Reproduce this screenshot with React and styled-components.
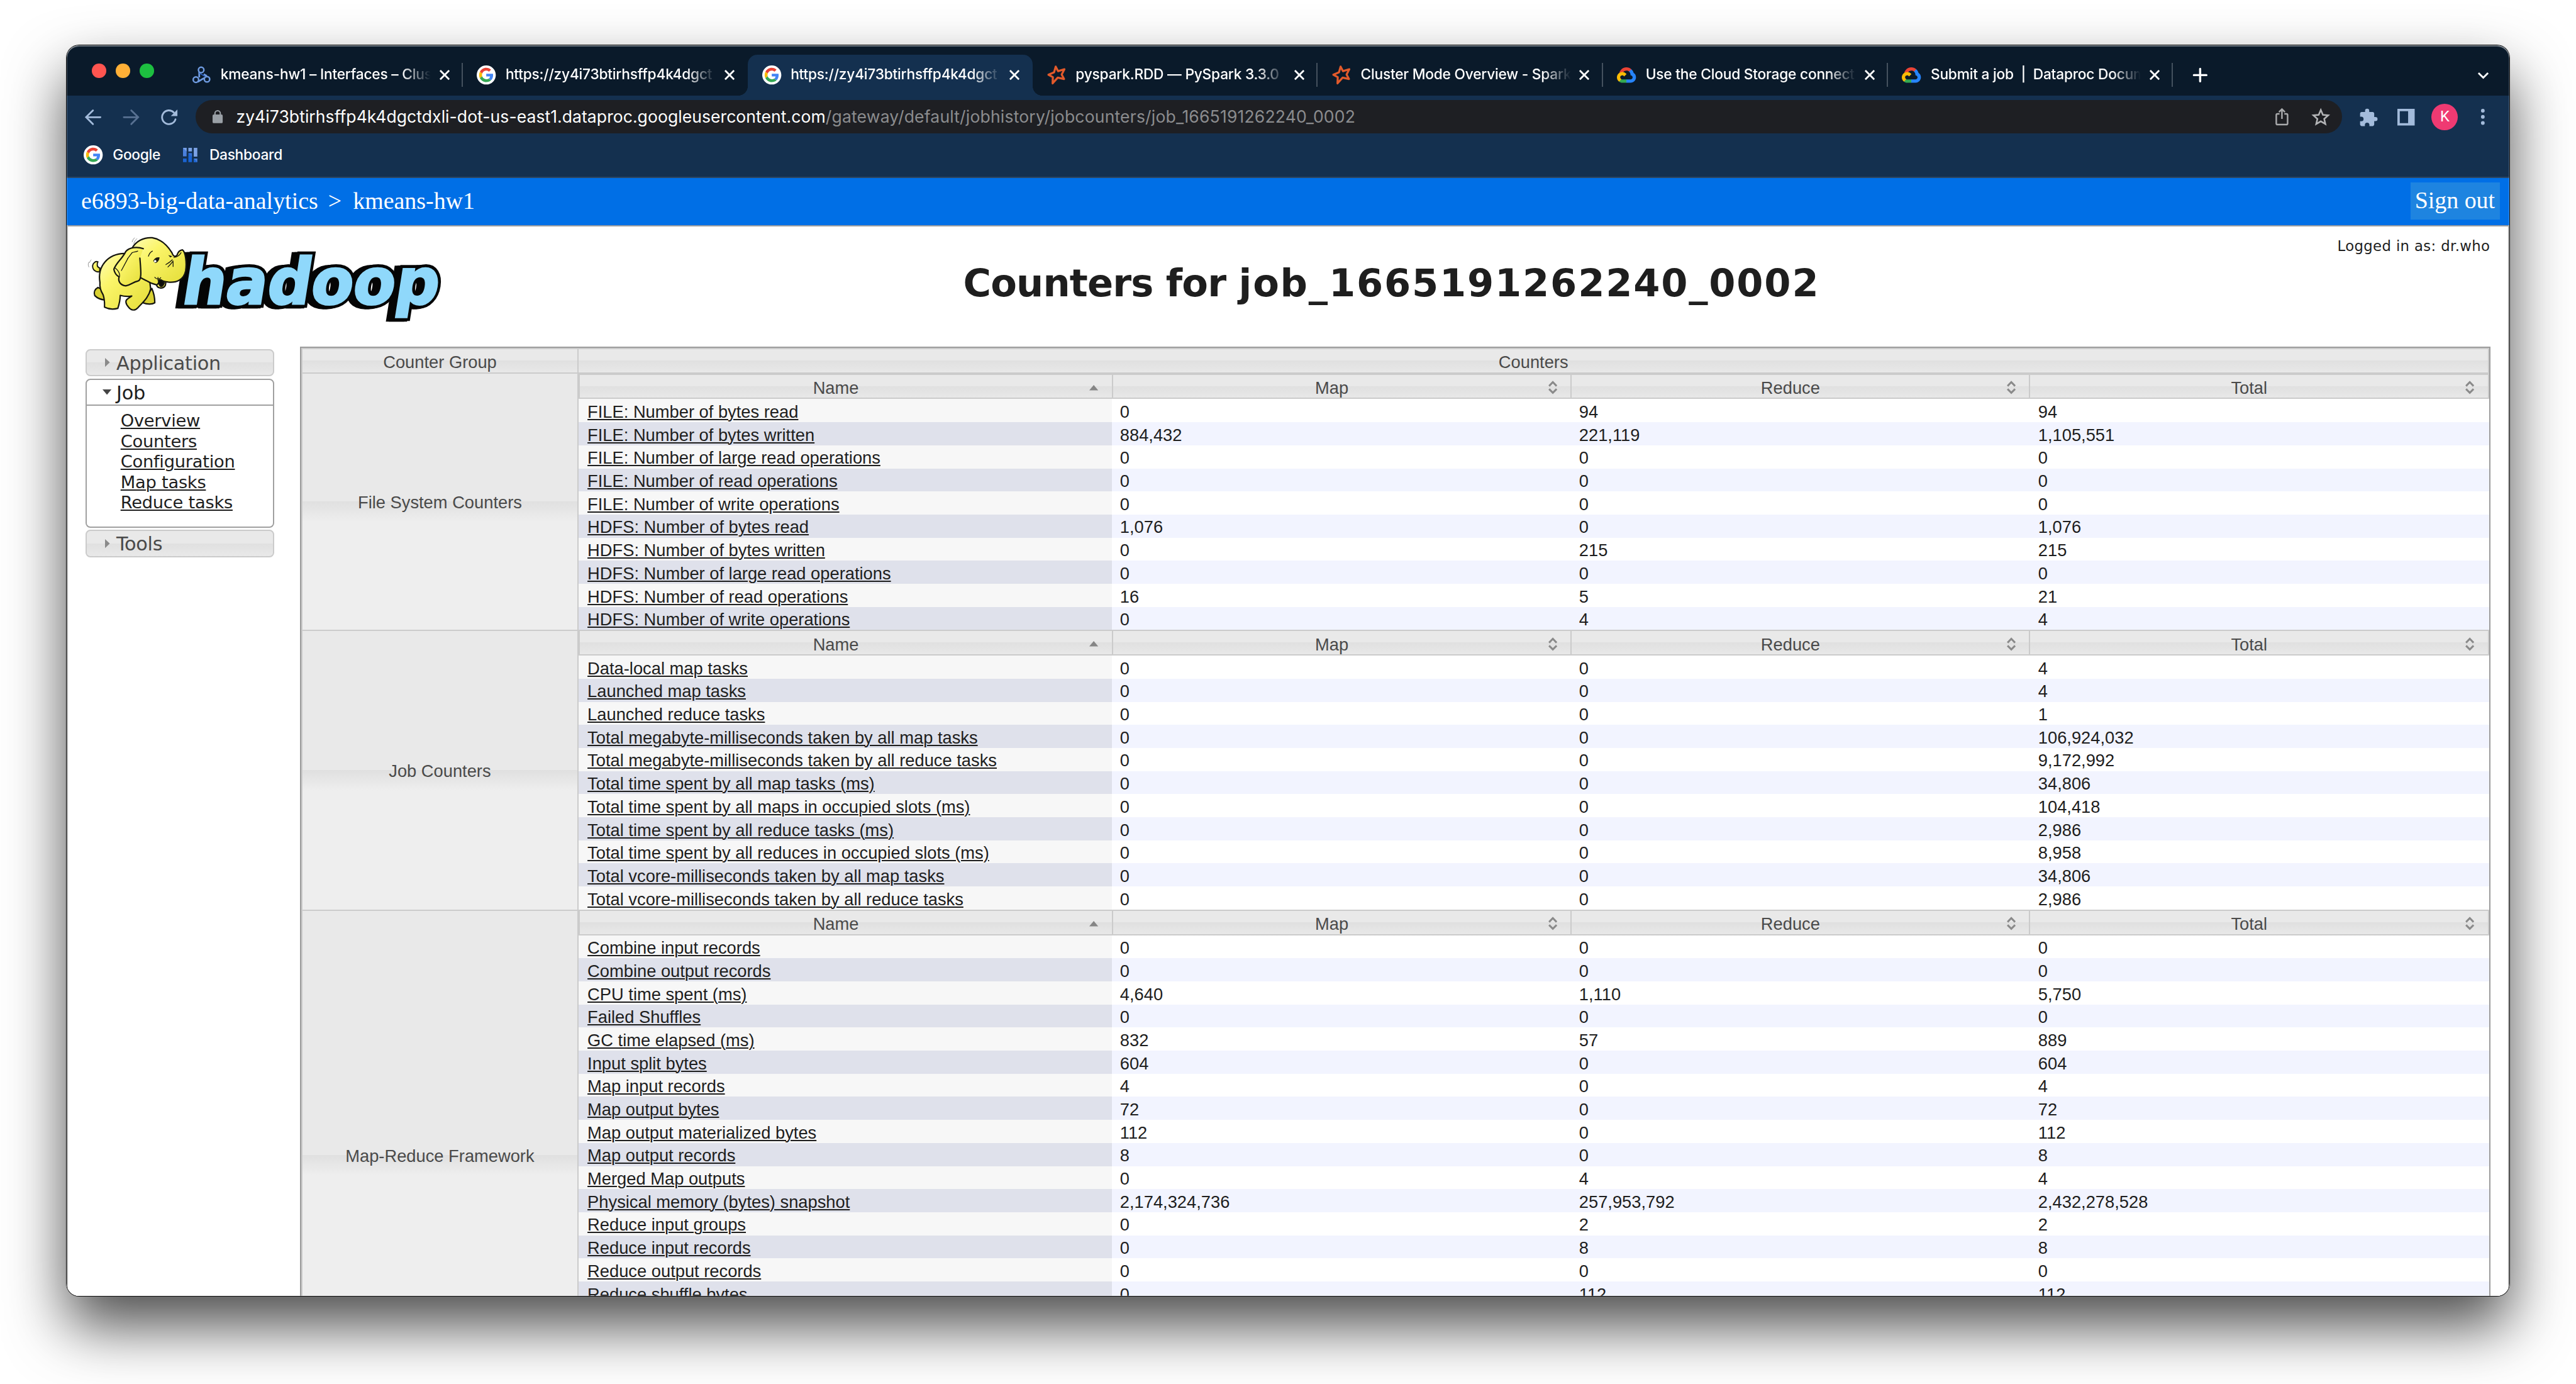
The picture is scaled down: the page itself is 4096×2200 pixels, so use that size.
import React from "react";
import styled, { createGlobalStyle, css } from "styled-components";

const SCALE = 4096 / 4320;
const u = (n) => `${(n * SCALE).toFixed(3)}px`;

const glass = css`
  background: linear-gradient(
    to bottom,
    #e9e9e9 0,
    #e9e9e9 50%,
    #e0e0e0 50%,
    #eeeeee calc(50% + ${u(34)}),
    #eeeeee 100%
  );
`;

const GlobalStyle = createGlobalStyle`
  html, body { margin: 0; padding: 0; background: #fff; overflow: hidden; }
  *, *::before, *::after { box-sizing: border-box; }
`;

const Desktop = styled.main`
  width: 4096px;
  height: 2200px;
  padding: ${u(76)} ${u(112)} ${u(148)};
  background: #fff;
  overflow: hidden;
  display: flex;
`;

const Window = styled.section`
  position: relative;
  flex: 1;
  min-width: 0;
  display: flex;
  flex-direction: column;
  overflow: hidden;
  border-radius: ${u(21)};
  background: #fff;

  &::after {
    content: "";
    position: absolute;
    inset: 0;
    border-radius: inherit;
    box-shadow: inset 0 2px 0 rgba(255, 255, 255, 0.34), inset 0 0 0 1px rgba(255, 255, 255, 0.25);
    pointer-events: none;
  }
`;

const WindowShadow = styled.div`
  flex: 1;
  min-width: 0;
  display: flex;
  border-radius: ${u(21)};
  box-shadow: 0 0 0 1px #0b0b0b, 0 ${u(50)} ${u(100)} rgba(0, 0, 0, 0.7);
`;

/* ---------- tab strip ---------- */

const TabStrip = styled.header`
  display: flex;
  align-items: flex-end;
  height: ${u(84)};
  flex: none;
  padding-left: ${u(42)};
  background: #0a1a2a;
`;

const TrafficLights = styled.div`
  display: flex;
  gap: ${u(16)};
  margin: 0 ${u(40)} ${u(29)} 0;
`;

const Light = styled.span`
  width: ${u(24)};
  height: ${u(24)};
  border-radius: 50%;
  background: ${(p) => p.$color};
`;

const TabItem = styled.div`
  position: relative;
  display: flex;
  align-items: center;
  width: ${u(478)};
  height: ${u(68)};
  padding-left: ${u(24)};
  border-radius: ${u(16)} ${u(16)} 0 0;
  background: ${(p) => (p.$active ? "#14304f" : "transparent")};

  ${(p) =>
    p.$active &&
    css`
      &::before,
      &::after {
        content: "";
        position: absolute;
        bottom: 0;
        width: ${u(16)};
        height: ${u(16)};
      }
      &::before {
        left: -${u(16)};
        background: radial-gradient(circle at 0 0, transparent ${u(15.5)}, #14304f ${u(16)});
      }
      &::after {
        right: -${u(16)};
        background: radial-gradient(circle at 100% 0, transparent ${u(15.5)}, #14304f ${u(16)});
      }
    `}
`;

const Favicon = styled.span`
  display: flex;
  align-items: center;
  justify-content: center;
  width: ${u(32)};
  height: ${u(32)};
  flex: none;
`;

const TabTitle = styled.span`
  width: ${u(352)};
  flex: none;
  margin-left: ${u(16)};
  padding-bottom: ${u(2)};
  white-space: pre;
  font: 500 ${u(24)} / ${u(34)} Inter, sans-serif;
  letter-spacing: ${u(-0.25)};
  color: #fff;
  mask-image: linear-gradient(to right, #000 ${u(304)}, transparent ${u(352)});
`;

const CloseButton = styled.span`
  display: flex;
  margin-left: ${u(15)};
`;

const TabDivider = styled.span`
  width: 2px;
  height: ${u(40)};
  margin-left: auto;
  background: #44515e;
`;

const NewTab = styled.span`
  display: flex;
  margin: 0 auto ${u(22)} ${u(34)};
`;

const TabSearch = styled.span`
  display: flex;
  margin: 0 ${u(35)} ${u(28)} 0;
`;

/* ---------- toolbar ---------- */

const Toolbar = styled.div`
  display: flex;
  align-items: center;
  height: ${u(72)};
  flex: none;
  padding-left: ${u(30)};
  background: #14304f;
`;

const NavButtons = styled.div`
  display: flex;
  gap: ${u(36)};
  width: ${u(186)};
  flex: none;
`;

const Omnibox = styled.div`
  display: flex;
  align-items: center;
  width: ${u(3600)};
  flex: none;
  height: ${u(56)};
  padding: 0 ${u(21)} 0 ${u(28)};
  border-radius: ${u(28)};
  background: #1e1f23;
  font: 400 ${u(28)} / ${u(40)} Inter, sans-serif;
`;

const UrlHost = styled.span`
  margin-left: ${u(23)};
  letter-spacing: ${u(0.06)};
  color: #fff;
`;

const UrlPath = styled.span`
  margin-right: auto;
  letter-spacing: ${u(0.19)};
  color: #8b8c8e;
`;

const OmniboxActions = styled.div`
  display: flex;
  align-items: center;
  gap: ${u(39)};
`;

const ToolbarActions = styled.div`
  display: flex;
  align-items: center;
  margin-left: ${u(29)};
  gap: ${u(34)};
`;

const Avatar = styled.span`
  display: flex;
  align-items: center;
  justify-content: center;
  width: ${u(44)};
  height: ${u(44)};
  margin: 0 ${u(5)} 0 ${u(-6)};
  border-radius: 50%;
  background: #ef3a72;
  font: 400 ${u(25)} / 1 Roboto, sans-serif;
  color: #fff;
`;

const BookmarksBar = styled.nav`
  display: flex;
  align-items: center;
  height: ${u(66)};
  flex: none;
  padding: 0 0 ${u(8)} ${u(28)};
  border-bottom: 2px solid #2c4663;
  background: #14304f;
`;

const Bookmark = styled.span`
  display: flex;
  align-items: center;
  gap: ${(p) => u(p.$gap)};
  margin-right: ${u(38)};
  font: 500 ${u(24)} / ${u(32)} Inter, sans-serif;
  letter-spacing: ${u(-0.3)};
  color: #fff;
`;

/* ---------- page ---------- */

const GatewayBar = styled.div`
  display: flex;
  align-items: center;
  justify-content: space-between;
  height: ${u(80)};
  flex: none;
  padding: 0 ${u(16)} 0 ${u(24)};
  background: #006fe6;
  font: 400 ${u(40)} / ${u(62)} "Liberation Serif", serif;
  color: #fff;
`;

const Breadcrumb = styled.span`
  padding-bottom: ${u(3)};
  white-space: pre;
`;

const Separator = styled.span`
  margin: 0 ${u(19)} 0 ${u(17)};
`;

const SignOut = styled.span`
  height: ${u(62)};
  margin-bottom: ${u(2)};
  padding: 0 ${u(8)} 0 ${u(7.5)};
  background: #1e84e0;
  line-height: ${u(60)};
`;

const Page = styled.div`
  flex: 1;
  min-height: 0;
  display: flex;
  flex-direction: column;
  border: 2px solid #a0a0a0;
  border-bottom: 0;
  background: #fff;
  color: #1e1e1e;
  font-family: "DejaVu Sans", sans-serif;
  overflow: hidden;
`;

const Banner = styled.div`
  display: grid;
  grid-template-columns: ${u(389)} 1fr ${u(300)};
  height: ${u(201)};
  flex: none;
`;

const LogoSlot = styled.div`
  padding: ${u(10)} 0 0 ${u(26)};
  overflow: visible;
  display: flex;
  align-items: flex-start;
`;

const Title = styled.h1`
  margin: 0;
  padding: ${u(55)} 0 0 ${u(258)};
  text-align: center;
  white-space: nowrap;
  font: 700 ${u(64)} / ${u(80)} "DejaVu Sans", sans-serif;
  letter-spacing: ${u(-0.9)};
`;

const JobId = styled.span`
  letter-spacing: ${u(1.9)};
`;

const UserInfo = styled.div`
  padding: ${u(17)} ${u(30)} 0 0;
  text-align: right;
  white-space: nowrap;
  font-size: ${u(24)};
  line-height: ${u(32)};
  letter-spacing: ${u(0.4)};
`;

const Columns = styled.div`
  display: flex;
  align-items: flex-start;
  padding-left: ${u(29)};
`;

const Sidebar = styled.aside`
  width: ${u(317)};
  flex: none;
  margin: ${u(4)} ${u(43)} 0 0;
`;

const SectionHead = styled.div`
  display: flex;
  align-items: center;
  height: ${u(46)};
  padding-left: ${u(27)};
  font-size: ${u(32)};
  line-height: ${u(40)};
  letter-spacing: ${u(-0.35)};
  border: 2px solid ${(p) => (p.$open ? "#a0a0a0" : "#cbcbcb")};
  border-radius: ${(p) => (p.$open ? `${u(8)} ${u(8)} 0 0` : u(8))};
  color: ${(p) => (p.$open ? "#1e1e1e" : "#4a4a4a")};
  margin-bottom: ${(p) => (p.$open ? 0 : u(3.5))};
  ${(p) => (p.$open ? "background: #fff;" : glass)}
`;

const SectionLabel = styled.span`
  padding-top: ${u(3)};
`;

const ArrowSlot = styled.span`
  display: flex;
  justify-content: center;
  width: ${u(15)};
  margin-right: ${u(8)};
`;

const LinkPanel = styled.div`
  display: flex;
  flex-direction: column;
  align-items: flex-start;
  height: ${u(204)};
  margin-bottom: ${u(3.5)};
  padding: ${u(8.5)} 0 0 ${u(57)};
  border: 2px solid #a0a0a0;
  border-top: 0;
  border-radius: 0 0 ${u(8)} ${u(8)};
  font-size: ${u(28.8)};
  line-height: ${u(34.3)};
  letter-spacing: ${u(-0.27)};
`;

const SideLink = styled.a`
  text-decoration: underline;
  text-decoration-thickness: 2px;
  text-underline-offset: ${u(2.5)};
`;

const CounterTable = styled.div`
  width: ${u(3674)};
  flex: none;
  border: 2px solid #9c9c9c;
  border-bottom: 0;
  font: 400 ${u(28.8)} / ${u(33)} "Liberation Sans", sans-serif;
`;

const HeaderRow = styled.div`
  display: flex;
  height: ${u(43)};
  border: solid #cbcbcb;
  border-width: 2px;
`;

const HeaderCell = styled.div`
  ${glass}
  display: flex;
  align-items: center;
  justify-content: center;
  padding-top: ${u(5)};
  color: #4a4a4a;
  ${(p) => (p.$first ? `width: ${u(463)}; flex: none; border-right: 2px solid #cbcbcb;` : "flex: 1;")}
`;

const Group = styled.div`
  display: flex;
  height: ${(p) => u(p.$height)};
`;

const GroupName = styled.div`
  ${glass}
  display: flex;
  align-items: center;
  justify-content: center;
  width: ${u(465)};
  flex: none;
  padding-top: ${u(3)};
  border: solid #cbcbcb;
  border-width: ${(p) => (p.$first ? "0" : "2px")} 2px 0 2px;
  color: #4a4a4a;
`;

const GroupBody = styled.div`
  flex: 1;
  padding-right: ${u(1)};
`;

const gridColumns = css`
  display: grid;
  grid-template-columns: ${u(894)} 1fr 1fr 1fr;
`;

const SubHeader = styled.div`
  ${gridColumns}
  height: ${u(43)};
  border: solid #cbcbcb;
  border-width: 2px 2px 2px 0;
`;

const SubHeaderCell = styled.div`
  ${glass}
  display: flex;
  align-items: center;
  padding: 0 ${u(22)} 0 ${u(4)};
  border-left: 2px solid #cbcbcb;
  color: #4a4a4a;
`;

const SubHeaderLabel = styled.span`
  flex: 1;
  padding-top: ${u(5)};
  text-align: center;
`;

const SortSlot = styled.span`
  display: flex;
  padding-top: ${u(4)};
`;

const Row = styled.div`
  ${gridColumns}
  height: ${u(38.71)};
  background: ${(p) => (p.$even ? "#f2f4ff" : "#ffffff")};
  line-height: ${u(38.71)};
`;

const NameCell = styled.div`
  padding: ${u(2.7)} 0 0 ${u(15)};
  background: ${(p) => (p.$even ? "#dfe1eb" : "#f7f7f7")};
`;

const ValueCell = styled.div`
  padding: ${u(2.7)} 0 0 ${u(14)};
`;

const CounterLink = styled.a`
  text-decoration: underline;
  text-decoration-thickness: 2px;
  text-underline-offset: ${u(2.5)};
`;

/* ---------- drawings ---------- */

const Svg = styled.svg`
  display: block;
  flex: none;
  width: ${(p) => u(p.$w)};
  height: ${(p) => u(p.$h)};
  overflow: visible;
`;

const GoogleIcon = () => (
  <Svg $w={32} $h={32} viewBox="0 0 32 32">
    <circle cx="16" cy="16" r="16" fill="#fff" />
    <g transform="translate(4 4)">
      <path fill="#ea4335" d="M12 4.75c1.77 0 3.35.61 4.6 1.8l3.43-3.43C17.95 1.19 15.24 0 12 0 7.31 0 3.26 2.69 1.28 6.61l3.99 3.1C6.22 6.86 8.87 4.75 12 4.75z" />
      <path fill="#4285f4" d="M23.49 12.27c0-.79-.07-1.54-.19-2.27H12v4.51h6.47c-.29 1.48-1.14 2.73-2.4 3.58l3.86 3c2.26-2.09 3.56-5.17 3.56-8.82z" />
      <path fill="#fbbc05" d="M5.26 14.29c-.25-.72-.38-1.49-.38-2.29s.14-1.57.38-2.29l-3.98-3.1C.46 8.23 0 10.06 0 12s.46 3.77 1.28 5.39z" />
      <path fill="#34a853" d="M12 24c3.24 0 5.95-1.06 7.93-2.91l-3.86-3c-1.08.72-2.45 1.16-4.07 1.16-3.13 0-5.78-2.11-6.73-4.96l-3.99 3.1C3.26 21.31 7.31 24 12 24z" />
    </g>
  </Svg>
);

const ClusterIcon = () => (
  <Svg $w={32} $h={30} viewBox="574 46 96 92" fill="none" stroke="#6f9be0" strokeWidth="8">
    <path d="M611 75V104M634 88L650 97M604 127L636 108" strokeWidth="9" />
    <path d="M612 82L640 99" stroke="#2a62c8" strokeWidth="5" />
    <circle cx="621" cy="66" r="14" />
    <circle cx="594" cy="116" r="14" />
    <circle cx="651" cy="114" r="14" />
  </Svg>
);

const SparkIcon = () => (
  <Svg $w={32} $h={32} viewBox="0 0 32 32" fill="none" stroke="#e25a2b" strokeWidth="3.4" strokeLinejoin="round">
    <path d="M14.4 2L18.3 9.6L29 6.4L24.4 15.4L28.4 22.8L17.8 20.4L9.2 30L9.6 19.6L2.2 15.6L11.6 11.6Z" />
  </Svg>
);

const CloudIcon = () => (
  <Svg $w={32} $h={26} viewBox="0 0 256 206">
    <path fill="#ea4335" d="M170.252 56.819l22.253-22.253 1.483-9.37C153.437-11.677 88.976-7.496 52.42 33.92 42.267 45.423 34.734 59.764 30.717 74.573l7.97-1.123 44.505-7.34 3.436-3.513c19.797-21.742 53.27-24.667 76.128-6.168z" />
    <path fill="#2684fc" d="M224.205 73.918a100.249 100.249 0 0 0-30.217-48.722l-31.232 31.232a55.515 55.515 0 0 1 20.379 44.037v5.544c15.35 0 27.797 12.445 27.797 27.796 0 15.352-12.446 27.485-27.797 27.485h-55.671l-5.466 5.934v33.34l5.466 5.231h55.67c39.93.311 72.553-31.494 72.864-71.424a72.303 72.303 0 0 0-31.793-60.453" />
    <path fill="#34a853" d="M71.87 205.796h55.593V161.29H71.87a27.275 27.275 0 0 1-11.4-2.498l-7.887 2.42-22.409 22.253-1.952 7.574c12.567 9.489 27.9 14.825 43.647 14.757" />
    <path fill="#fbbc05" d="M71.87 61.425C31.94 61.664-.237 94.228.001 134.158a72.301 72.301 0 0 0 28.222 56.88l32.248-32.246c-13.99-6.322-20.208-22.786-13.887-36.776 6.32-13.99 22.786-20.208 36.775-13.888a27.796 27.796 0 0 1 13.887 13.888l32.248-32.248A72.224 72.224 0 0 0 71.87 61.425" />
  </Svg>
);

const DashboardIcon = () => (
  <Svg $w={24} $h={24} viewBox="528 459 72 72">
    <path fill="#4a80dc" d="M528 459h18v43h-18zM582 513h18v18h-18z" />
    <path fill="#7ba2e6" d="M555 459h18v18h-18zM582 459h18v44h-18zM528 459h18v18z" />
    <path fill="#1a63d2" d="M555 486h18v45h-18zM528 513h18v18h-18zM582 513v18h18z" />
    <path fill="#3571d8" d="M555 486h18v18z" />
  </Svg>
);

const CloseIcon = () => (
  <Svg $w={17} $h={17} viewBox="0 0 17 17" stroke="#fff" strokeWidth="3">
    <path d="M1 1L16 16M16 1L1 16" />
  </Svg>
);

const PlusIcon = () => (
  <Svg $w={24} $h={24} viewBox="0 0 24 24" stroke="#fff" strokeWidth="3.6" strokeLinecap="round">
    <path d="M12 1.5V22.5M1.5 12H22.5" />
  </Svg>
);

const ChevronDownIcon = () => (
  <Svg $w={18} $h={11} viewBox="0 0 18 11" fill="none" stroke="#fff" strokeWidth="3">
    <path d="M1 1L9 9L17 1" />
  </Svg>
);

const BackIcon = () => (
  <Svg $w={28} $h={26} viewBox="0 0 28 26" fill="none" stroke="#a3bbdb" strokeWidth="3" strokeLinecap="round">
    <path d="M13.5 1.5L2 13L13.5 24.5M2.5 13H26" />
  </Svg>
);

const ForwardIcon = () => (
  <Svg $w={28} $h={26} viewBox="0 0 28 26" fill="none" stroke="#587192" strokeWidth="3" strokeLinecap="round">
    <path d="M14.5 1.5L26 13L14.5 24.5M25.5 13H2" />
  </Svg>
);

const ReloadIcon = () => (
  <Svg $w={28} $h={26} viewBox="0 0 28 26" fill="none" stroke="#a3bbdb" strokeWidth="3">
    <path d="M24.3 16.5A11.5 11.5 0 1 1 21.4 4.9" strokeLinecap="round" />
    <path d="M27.5 0V11H16.5Z" fill="#a3bbdb" stroke="none" />
  </Svg>
);

const LockIcon = () => (
  <Svg $w={17} $h={22} viewBox="0 0 17 22">
    <rect x="0" y="7.5" width="17" height="14.5" rx="2" fill="#9aa0a6" />
    <path d="M4 9V5.5a4.5 4.5 0 0 1 9 0V9" fill="none" stroke="#9aa0a6" strokeWidth="2.2" />
  </Svg>
);

const ShareIcon = () => (
  <Svg $w={22} $h={29} viewBox="0 0 22 29" fill="none" stroke="#a9aaac" strokeWidth="2.6">
    <path d="M7 9.5H3.5a2 2 0 0 0-2 2V25.500a2 2 0 0 0 2 2h15a2 2 0 0 0 2-2V11.500a2 2 0 0 0-2-2H15M11 18V2M6 6.500L11 1.600L16 6.500" />
  </Svg>
);

const StarIcon = () => (
  <Svg $w={30} $h={29} viewBox="0 0 30 29" fill="none" stroke="#b3b4b6" strokeWidth="2.7">
    <path d="M15 3L18.5 11.2L27.400 12L20.700 17.900L22.700 26.600L15 22L7.300 26.600L9.300 17.900L2.600 12L11.500 11.200Z" />
  </Svg>
);

const PuzzleIcon = () => (
  <Svg $w={30} $h={30} viewBox="1.500 0.500 21.500 21.500" fill="#a3bbdb">
    <path d="M20.500 11H19V7c0-1.100-.9-2-2-2h-4V3.500a2.500 2.500 0 0 0-5 0V5H4c-1.100 0-1.990.9-1.990 2v3.800H3.500a2.700 2.700 0 0 1 0 5.400H2V20c0 1.100.9 2 2 2h3.800v-1.500a2.700 2.700 0 0 1 5.400 0V22H17c1.100 0 2-.9 2-2v-4h1.500a2.500 2.500 0 0 0 0-5z" />
  </Svg>
);

const SidePanelIcon = () => (
  <Svg $w={29} $h={28} viewBox="0 0 29 28">
    <path fill="#a3bbdb" fillRule="evenodd" d="M0 0H29V28H0ZM4 4V24H18V4Z" />
  </Svg>
);

const MenuIcon = () => (
  <Svg $w={6} $h={27} viewBox="0 0 6 27" fill="#a3bbdb">
    <circle cx="3" cy="3.200" r="3.100" />
    <circle cx="3" cy="13.500" r="3.100" />
    <circle cx="3" cy="23.800" r="3.100" />
  </Svg>
);

const SortAscIcon = () => (
  <Svg $w={15} $h={9} viewBox="0 0 15 9">
    <path d="M7.500 0L15 9H0Z" fill="#858585" />
  </Svg>
);

const SortIcon = () => (
  <Svg $w={15} $h={21} viewBox="0 0 15 21" fill="none" stroke="#8a8a8a" strokeWidth="3.200">
    <path d="M1.200 8L7.500 1.600L13.800 8M1.200 13L7.500 19.400L13.800 13" />
  </Svg>
);

const ArrowRight = () => (
  <Svg $w={8} $h={15} viewBox="0 0 8 15">
    <path d="M0 0L8 7.500L0 15Z" fill="#8a8a8a" />
  </Svg>
);

const ArrowDown = () => (
  <Svg $w={15} $h={9} viewBox="0 0 15 9">
    <path d="M0 0H15L7.500 9Z" fill="#454545" />
  </Svg>
);

const wordmark = {
  x: 0,
  y: 0,
  fontFamily: '"DejaVu Sans", sans-serif',
  fontWeight: 700,
  fontSize: 320,
  textLength: 1290,
  lengthAdjust: "spacingAndGlyphs",
};

const HadoopLogo = () => (
  <Svg $w={610} $h={150} viewBox="0 0 1830 450">
    <defs>
      <linearGradient id="skin" x1="0" y1="0" x2="1" y2="1">
        <stop offset="0" stopColor="#fdfbb8" />
        <stop offset="0.35" stopColor="#fbf56a" />
        <stop offset="1" stopColor="#e3dc36" />
      </linearGradient>
      <g id="letters">
        <text {...wordmark}>hadoop</text>
      </g>
    </defs>
    <g transform="translate(486 358) skewX(-9)" strokeLinejoin="miter" strokeMiterlimit="3">
      <g aria-hidden="true" fill="#050505" stroke="#050505" strokeWidth="40">
        <use href="#letters" x="-28" y="4" />
        <use href="#letters" x="-14" y="2" />
        <use href="#letters" />
      </g>
      <g aria-hidden="true" fill="#8fd8fb" stroke="#8fd8fb" strokeWidth="10">
        <use href="#letters" />
      </g>
    </g>
    <g stroke="#15150f" strokeWidth="7" strokeLinejoin="round" strokeLinecap="round" fill="url(#skin)">
      <path d="M80 196C60 200 45 186 45 166C48 150 60 142 72 146C64 160 68 174 82 178Z" strokeWidth="6" />
      <path d="M72 275C55 284 50 300 56 316C70 330 86 336 106 338L100 288Z" fill="#d9d133" />
      <path d="M298 352C320 361 345 361 358 352C358 325 352 300 343 280Z" fill="#d9d133" />
      <path d="M82 250C68 170 120 106 206 104L330 220L337 282C328 325 300 348 272 378C258 393 240 392 226 374C210 356 208 340 222 332L242 318C222 322 202 320 184 315C184 340 178 362 172 380C150 386 125 384 105 374C106 350 106 335 98 312C84 290 80 270 82 250Z" />
      <path d="M366 258C368 278 392 284 406 272C416 262 414 250 410 238Z" />
      <path d="M242 80C262 42 302 22 345 25C390 32 424 68 444 100C452 122 462 122 470 112C474 98 484 88 497 86C512 96 520 150 513 192C504 236 468 252 426 248C410 246 398 244 388 238C380 246 376 256 368 262C348 258 330 250 316 241L236 200Z" />
      <path d="M378 240C388 232 400 242 405 252C402 262 396 270 388 270C380 262 376 250 378 240Z" fill="#0c0c08" />
      <path d="M300 80C268 68 230 74 212 94C196 130 164 148 152 184C156 206 168 216 178 222C172 246 186 264 212 267C238 262 248 248 272 243C294 240 288 190 283 128" />
    </g>
    <g fill="none" stroke="#15150f" strokeWidth="4" strokeLinecap="round">
      <path d="M220 132L244 100C254 96 264 96 272 92M190 190L222 130M160 178C176 192 184 206 180 222M326 118C330 104 338 96 346 92M414 160C428 152 440 142 446 136M424 172C434 162 444 152 450 142M450 146V170M454 124C470 122 484 112 490 100M358 224C366 234 380 236 388 226M374 224V240" />
      <path d="M26 148C22 156 22 164 26 172M38 136C34 140 32 144 30 150M244 46C246 38 250 30 256 26M252 54C256 42 262 36 268 30" strokeWidth="2.500" stroke="#777" />
    </g>
    <path d="M350 142C356 128 366 122 382 124C380 140 372 150 360 152Z" fill="#1a1a12" />
    <circle cx="360" cy="143" r="6" fill="#fff" />
    <path d="M426 112L446 118L436 124Z" fill="#1a1a12" />
  </Svg>
);

/* ---------- data ---------- */

const TABS = [
  { title: "kmeans-hw1 – Interfaces – Clus", Icon: ClusterIcon, divider: true },
  { title: "https://zy4i73btirhsffp4k4dgct", Icon: GoogleIcon },
  { title: "https://zy4i73btirhsffp4k4dgct", Icon: GoogleIcon, active: true },
  { title: "pyspark.RDD — PySpark 3.3.0", Icon: SparkIcon, divider: true },
  { title: "Cluster Mode Overview - Spark", Icon: SparkIcon, divider: true },
  { title: "Use the Cloud Storage connect", Icon: CloudIcon, divider: true },
  { title: "Submit a job  |  Dataproc Docum", Icon: CloudIcon, divider: true },
];

const GROUPS = [
  {
    name: "File System Counters",
    height: 430,
    rows: [
      ["FILE: Number of bytes read", "0", "94", "94"],
      ["FILE: Number of bytes written", "884,432", "221,119", "1,105,551"],
      ["FILE: Number of large read operations", "0", "0", "0"],
      ["FILE: Number of read operations", "0", "0", "0"],
      ["FILE: Number of write operations", "0", "0", "0"],
      ["HDFS: Number of bytes read", "1,076", "0", "1,076"],
      ["HDFS: Number of bytes written", "0", "215", "215"],
      ["HDFS: Number of large read operations", "0", "0", "0"],
      ["HDFS: Number of read operations", "16", "5", "21"],
      ["HDFS: Number of write operations", "0", "4", "4"],
    ],
  },
  {
    name: "Job Counters",
    height: 468.8,
    rows: [
      ["Data-local map tasks", "0", "0", "4"],
      ["Launched map tasks", "0", "0", "4"],
      ["Launched reduce tasks", "0", "0", "1"],
      ["Total megabyte-milliseconds taken by all map tasks", "0", "0", "106,924,032"],
      ["Total megabyte-milliseconds taken by all reduce tasks", "0", "0", "9,172,992"],
      ["Total time spent by all map tasks (ms)", "0", "0", "34,806"],
      ["Total time spent by all maps in occupied slots (ms)", "0", "0", "104,418"],
      ["Total time spent by all reduce tasks (ms)", "0", "0", "2,986"],
      ["Total time spent by all reduces in occupied slots (ms)", "0", "0", "8,958"],
      ["Total vcore-milliseconds taken by all map tasks", "0", "0", "34,806"],
      ["Total vcore-milliseconds taken by all reduce tasks", "0", "0", "2,986"],
    ],
  },
  {
    name: "Map-Reduce Framework",
    height: 821,
    rows: [
      ["Combine input records", "0", "0", "0"],
      ["Combine output records", "0", "0", "0"],
      ["CPU time spent (ms)", "4,640", "1,110", "5,750"],
      ["Failed Shuffles", "0", "0", "0"],
      ["GC time elapsed (ms)", "832", "57", "889"],
      ["Input split bytes", "604", "0", "604"],
      ["Map input records", "4", "0", "4"],
      ["Map output bytes", "72", "0", "72"],
      ["Map output materialized bytes", "112", "0", "112"],
      ["Map output records", "8", "0", "8"],
      ["Merged Map outputs", "0", "4", "4"],
      ["Physical memory (bytes) snapshot", "2,174,324,736", "257,953,792", "2,432,278,528"],
      ["Reduce input groups", "0", "2", "2"],
      ["Reduce input records", "0", "8", "8"],
      ["Reduce output records", "0", "0", "0"],
      ["Reduce shuffle bytes", "0", "112", "112"],
    ],
  },
];

const JOB_LINKS = ["Overview", "Counters", "Configuration", "Map tasks", "Reduce tasks"];
const COLUMNS = ["Name", "Map", "Reduce", "Total"];

/* ---------- composition ---------- */

const Tab = ({ title, Icon, active, divider }) => (
  <TabItem $active={active}>
    <Favicon>
      <Icon />
    </Favicon>
    <TabTitle>{title}</TabTitle>
    <CloseButton>
      <CloseIcon />
    </CloseButton>
    {divider && <TabDivider />}
  </TabItem>
);

const CounterGroup = ({ name, height, rows, first }) => (
  <Group $height={height}>
    <GroupName $first={first}>{name}</GroupName>
    <GroupBody>
      <SubHeader>
        {COLUMNS.map((c, i) => (
          <SubHeaderCell key={c}>
            <SubHeaderLabel>{c}</SubHeaderLabel>
            <SortSlot>{i === 0 ? <SortAscIcon /> : <SortIcon />}</SortSlot>
          </SubHeaderCell>
        ))}
      </SubHeader>
      {rows.map(([label, ...values], i) => (
        <Row key={label} $even={i % 2 === 1}>
          <NameCell $even={i % 2 === 1}>
            <CounterLink>{label}</CounterLink>
          </NameCell>
          {values.map((v, j) => (
            <ValueCell key={j}>{v}</ValueCell>
          ))}
        </Row>
      ))}
    </GroupBody>
  </Group>
);

export default function App() {
  return (
    <>
      <GlobalStyle />
      <Desktop>
        <WindowShadow>
          <Window>
            <TabStrip>
              <TrafficLights>
                <Light $color="#ff5550" />
                <Light $color="#ffb037" />
                <Light $color="#1dbf40" />
              </TrafficLights>
              {TABS.map((t, i) => (
                <Tab key={i} {...t} />
              ))}
              <NewTab>
                <PlusIcon />
              </NewTab>
              <TabSearch>
                <ChevronDownIcon />
              </TabSearch>
            </TabStrip>
            <Toolbar>
              <NavButtons>
                <BackIcon />
                <ForwardIcon />
                <ReloadIcon />
              </NavButtons>
              <Omnibox>
                <LockIcon />
                <UrlHost>zy4i73btirhsffp4k4dgctdxli-dot-us-east1.dataproc.googleusercontent.com</UrlHost>
                <UrlPath>/gateway/default/jobhistory/jobcounters/job_1665191262240_0002</UrlPath>
                <OmniboxActions>
                  <ShareIcon />
                  <StarIcon />
                </OmniboxActions>
              </Omnibox>
              <ToolbarActions>
                <PuzzleIcon />
                <SidePanelIcon />
                <Avatar>K</Avatar>
                <MenuIcon />
              </ToolbarActions>
            </Toolbar>
            <BookmarksBar>
              <Bookmark $gap={17}>
                <GoogleIcon />
                Google
              </Bookmark>
              <Bookmark $gap={20}>
                <DashboardIcon />
                Dashboard
              </Bookmark>
            </BookmarksBar>
            <GatewayBar>
              <Breadcrumb>
                e6893-big-data-analytics
                <Separator>&gt;</Separator>
                kmeans-hw1
              </Breadcrumb>
              <SignOut>Sign out</SignOut>
            </GatewayBar>
            <Page>
              <Banner>
                <LogoSlot>
                  <HadoopLogo />
                </LogoSlot>
                <Title>
                  Counters for <JobId>job_1665191262240_0002</JobId>
                </Title>
                <UserInfo>Logged in as: dr.who</UserInfo>
              </Banner>
              <Columns>
                <Sidebar>
                  <SectionHead>
                    <ArrowSlot>
                      <ArrowRight />
                    </ArrowSlot>
                    <SectionLabel>Application</SectionLabel>
                  </SectionHead>
                  <SectionHead $open>
                    <ArrowSlot>
                      <ArrowDown />
                    </ArrowSlot>
                    <SectionLabel>Job</SectionLabel>
                  </SectionHead>
                  <LinkPanel>
                    {JOB_LINKS.map((l) => (
                      <SideLink key={l}>{l}</SideLink>
                    ))}
                  </LinkPanel>
                  <SectionHead>
                    <ArrowSlot>
                      <ArrowRight />
                    </ArrowSlot>
                    <SectionLabel>Tools</SectionLabel>
                  </SectionHead>
                </Sidebar>
                <CounterTable>
                  <HeaderRow>
                    <HeaderCell $first>Counter Group</HeaderCell>
                    <HeaderCell>Counters</HeaderCell>
                  </HeaderRow>
                  {GROUPS.map((g, i) => (
                    <CounterGroup key={g.name} {...g} first={i === 0} />
                  ))}
                </CounterTable>
              </Columns>
            </Page>
          </Window>
        </WindowShadow>
      </Desktop>
    </>
  );
}
